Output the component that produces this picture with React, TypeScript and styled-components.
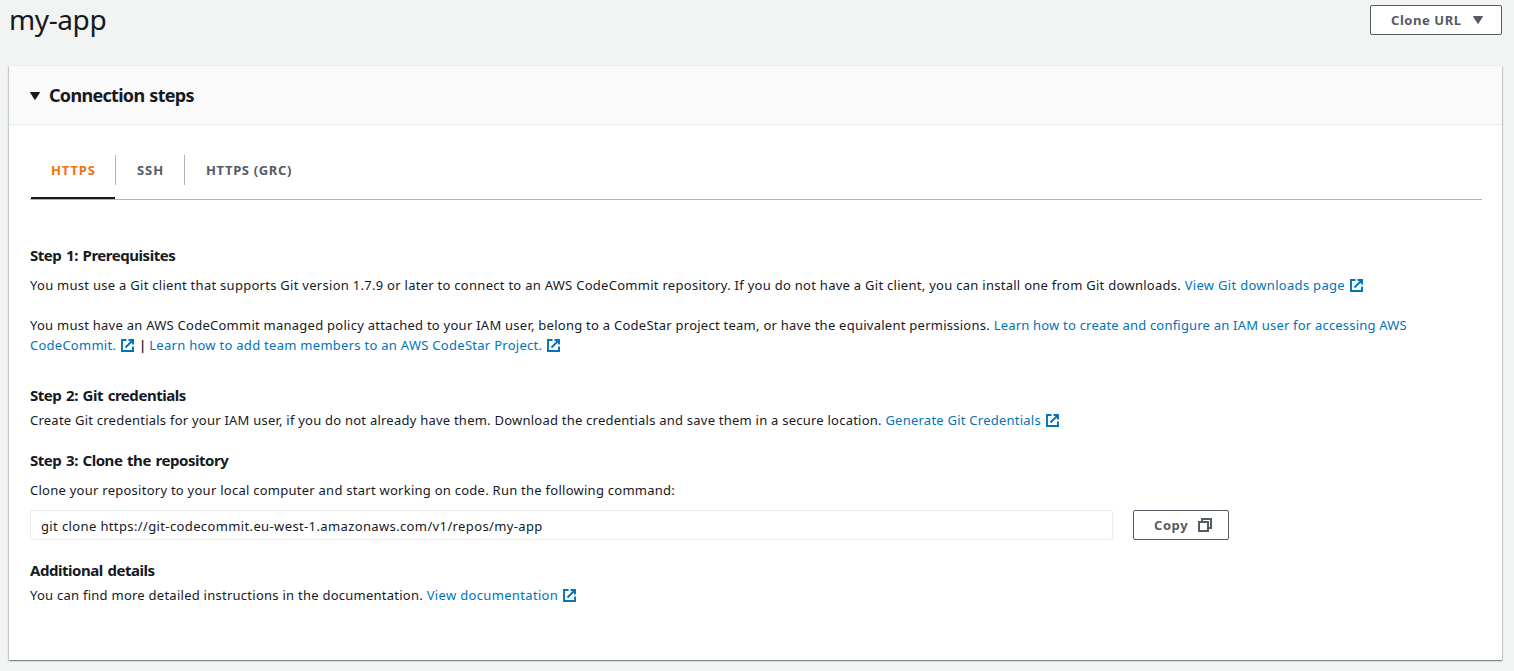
import React from 'react';
import styled, { createGlobalStyle } from 'styled-components';

const GlobalStyle = createGlobalStyle`
  * { box-sizing: border-box; }
  body {
    margin: 0;
    background: #f2f3f3;
    color: #16191f;
    font: 13px/20px "Noto Sans", sans-serif;
  }
`;

const Page = styled.main`
  height: 671px;
  padding: 5px 12px 0 9px;
`;

const PageHeader = styled.header`
  display: flex;
  justify-content: space-between;
  align-items: flex-start;
  height: 61px;
`;

const Title = styled.h1`
  margin: -4px 0 0;
  font-size: 28px;
  line-height: 36px;
  font-weight: 400;
  letter-spacing: -0.4px;
`;

const Button = styled.button<{ $width: number; $end: number }>`
  display: flex;
  align-items: center;
  justify-content: space-between;
  width: ${(p) => p.$width}px;
  height: 30px;
  padding: 0 ${(p) => p.$end}px 0 20px;
  border: 1px solid #545b64;
  border-radius: 2px;
  background: #fff;
  color: #545b64;
  font: 700 13px/20px "Noto Sans", sans-serif;
  letter-spacing: 0.57px;
`;

const Panel = styled.section`
  height: 594px;
  background: #fff;
  box-shadow: 0 -1px 0 0 #eaeded, 0 1px 1px 0 rgba(0, 28, 36, 0.3),
    1px 1px 1px 0 rgba(0, 28, 36, 0.15), -1px 1px 1px 0 rgba(0, 28, 36, 0.15);
`;

const PanelHeader = styled.div`
  display: flex;
  align-items: center;
  gap: 8px;
  height: 59px;
  padding: 1px 0 0 20px;
  background: #fafafa;
  border-bottom: 1px solid #eaeded;
`;

const PanelTitle = styled.h2`
  margin: 0 0 2px;
  font-size: 18px;
  line-height: 22px;
  font-weight: 700;
  letter-spacing: -0.7px;
  word-spacing: 1px;
`;

const PanelBody = styled.div`
  padding: 30px 20px 0 21px;
`;

const Tabs = styled.nav`
  display: flex;
  height: 45px;
  border-bottom: 1px solid #aab7b8;
`;

const Tab = styled.div<{ $active?: boolean; $width: number; $spacing: number }>`
  display: flex;
  flex-direction: column;
  justify-content: space-between;
  width: ${(p) => p.$width}px;
  height: 44px;
  color: ${(p) => (p.$active ? '#ec7211' : '#545b64')};
  font-weight: 700;
  letter-spacing: ${(p) => p.$spacing}px;
  white-space: nowrap;
  &::after {
    content: '';
    height: 2px;
    margin: 0 1px;
    background: ${(p) => (p.$active ? '#16191f' : 'transparent')};
  }
`;

const TabLabel = styled.span`
  height: 30px;
  padding-left: 21px;
  line-height: 30px;
  border-right: 1px solid #aab7b8;
  ${Tab}:last-child & {
    border-right: 0;
  }
`;

const Step = styled.section<{ $top: number; $gap: number }>`
  margin-top: ${(p) => p.$top}px;
  display: flex;
  flex-direction: column;
  gap: ${(p) => p.$gap}px;
`;

const StepTitle = styled.h3`
  margin: -1px 0 1px;
  font-size: 15px;
  line-height: 20px;
  font-weight: 700;
  letter-spacing: -0.46px;
  word-spacing: 1.2px;
`;

const Paragraph = styled.p`
  margin: 0;
  white-space: nowrap;
`;

const Copy = styled.span<{ $spacing?: number }>`
  letter-spacing: ${(p) => p.$spacing ?? 0.25}px;
`;

const Link = styled.a<{ $spacing?: number }>`
  color: #0073bb;
  letter-spacing: ${(p) => p.$spacing ?? 0.25}px;
`;

const Divider = styled.span`
  margin: 0 3px 0 5px;
  font-weight: 600;
`;

const LinkIcon = styled.svg`
  width: 13px;
  height: 13px;
  margin-left: 5px;
  vertical-align: -2px;
`;

const CommandRow = styled.div`
  display: flex;
  gap: 20px;
  margin-top: 1px;
`;

const Command = styled.div`
  width: 1083px;
  height: 30px;
  padding: 1px 10px 0;
  border: 1px solid #eaeded;
  border-radius: 2px;
  line-height: 28px;
  letter-spacing: 0.375px;
`;

function External() {
  return (
    <LinkIcon viewBox="0 0 13 13" fill="none" stroke="#0073bb" strokeWidth="1.9">
      <path d="M5.5 1H1V12H12V7.5M7.5 1H12V5.5M12 1L4.5 8.5" />
    </LinkIcon>
  );
}

function Caret({ color }: { color: string }) {
  return (
    <svg width="12" height="10" viewBox="0 0 12 10">
      <path d="M1.5 1.5H10.5L6 8.5Z" fill={color} stroke={color} strokeLinejoin="round" />
    </svg>
  );
}

function CopyIcon() {
  return (
    <svg width="14" height="14" viewBox="0 0 14 14" fill="none" stroke="#545b64" strokeWidth="2">
      <path d="M1 4H10V13H1ZM4 4V1H13V10H10" />
    </svg>
  );
}

export default function App() {
  return (
    <>
      <GlobalStyle />
      <Page>
        <PageHeader>
          <Title>my-app</Title>
          <Button $width={132} $end={17}>
            Clone URL <Caret color="#545b64" />
          </Button>
        </PageHeader>
        <Panel>
          <PanelHeader>
            <Caret color="#16191f" />
            <PanelTitle>Connection steps</PanelTitle>
          </PanelHeader>
          <PanelBody>
            <Tabs>
              <Tab $active $width={86} $spacing={0.85}><TabLabel>HTTPS</TabLabel></Tab>
              <Tab $width={69} $spacing={0.95}><TabLabel>SSH</TabLabel></Tab>
              <Tab $width={120} $spacing={0.64}><TabLabel>HTTPS (GRC)</TabLabel></Tab>
            </Tabs>
            <Step $top={46} $gap={9}>
              <StepTitle>Step 1: Prerequisites</StepTitle>
              <Paragraph>
                <Copy $spacing={0.277}>You must use a Git client that supports Git version 1.7.9 or later to connect to an AWS CodeCommit repository. If you do not have a Git client, you can install one from Git downloads. </Copy>
                <Link $spacing={0.3}>View Git downloads page</Link><External />
              </Paragraph>
            </Step>
            <Step $top={20} $gap={0}>
              <Paragraph>
                <Copy $spacing={0.254}>You must have an AWS CodeCommit managed policy attached to your IAM user, belong to a CodeStar project team, or have the equivalent permissions. </Copy>
                <Link $spacing={0.2}>Learn how to create and configure an IAM user for accessing AWS</Link>
                <br />
                <Link>CodeCommit.</Link><External />
                <Divider>|</Divider>
                <Link $spacing={0.28}>Learn how to add team members to an AWS CodeStar Project.</Link><External />
              </Paragraph>
            </Step>
            <Step $top={31} $gap={4}>
              <StepTitle>Step 2: Git credentials</StepTitle>
              <Paragraph>
                <Copy $spacing={0.232}>Create Git credentials for your IAM user, if you do not already have them. Download the credentials and save them in a secure location. </Copy>
                <Link $spacing={0.24}>Generate Git Credentials</Link><External />
              </Paragraph>
            </Step>
            <Step $top={21} $gap={9}>
              <StepTitle>Step 3: Clone the repository</StepTitle>
              <Paragraph>
                <Copy $spacing={0.256}>Clone your repository to your local computer and start working on code. Run the following command:</Copy>
              </Paragraph>
              <CommandRow>
                <Command>git clone https://git-codecommit.eu-west-1.amazonaws.com/v1/repos/my-app</Command>
                <Button $width={96} $end={16}>
                  Copy <CopyIcon />
                </Button>
              </CommandRow>
            </Step>
            <Step $top={21} $gap={4}>
              <StepTitle>Additional details</StepTitle>
              <Paragraph>
                <Copy $spacing={0.254}>You can find more detailed instructions in the documentation. </Copy>
                <Link $spacing={0.34}>View documentation</Link><External />
              </Paragraph>
            </Step>
          </PanelBody>
        </Panel>
      </Page>
    </>
  );
}
